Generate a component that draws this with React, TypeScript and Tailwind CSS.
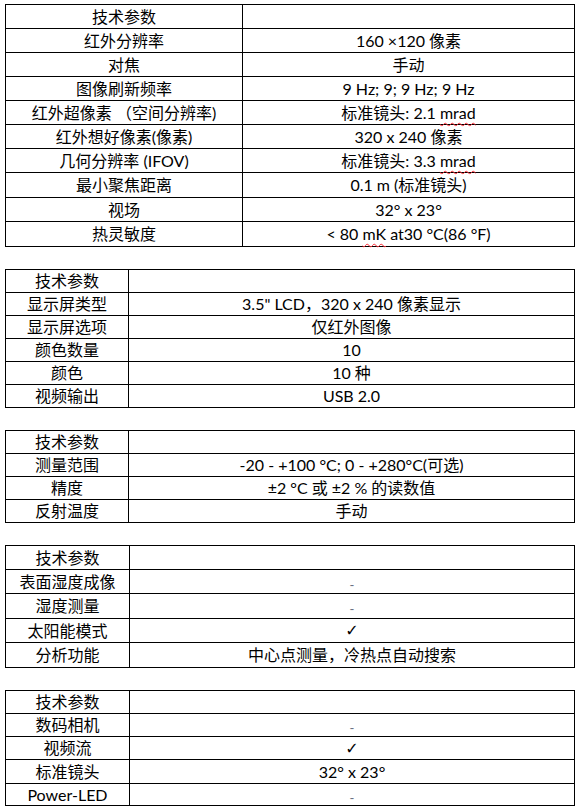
import React from "react";

type Cell = React.ReactNode;
type Row = { label: Cell; value: Cell; h: string };

const Squiggle = ({ children }: { children: React.ReactNode }) => (
  <span className="underline decoration-wavy decoration-red-500 decoration-1 underline-offset-[3px]">{children}</span>
);

const T1: Row[] = [
  { label: "技术参数", value: "", h: "h-[24px]" },
  { label: "红外分辨率", value: "160 ×120 像素", h: "h-[24px]" },
  { label: "对焦", value: "手动", h: "h-[24px]" },
  { label: "图像刷新频率", value: "9 Hz; 9; 9 Hz; 9 Hz", h: "h-[24px]" },
  {
    label: "红外超像素 （空间分辨率)",
    value: (
      <>
        标准镜头: 2.1 <Squiggle>mrad</Squiggle>
      </>
    ),
    h: "h-[24px]",
  },
  { label: "红外想好像素(像素)", value: "320 x 240 像素", h: "h-[24px]" },
  {
    label: "几何分辨率 (IFOV)",
    value: (
      <>
        标准镜头: 3.3 <Squiggle>mrad</Squiggle>
      </>
    ),
    h: "h-[24px]",
  },
  { label: "最小聚焦距离", value: "0.1 m (标准镜头)", h: "h-[25px]" },
  { label: "视场", value: "32° x 23°", h: "h-[24px]" },
  {
    label: "热灵敏度",
    value: (
      <>
        &lt; 80 <Squiggle>mK</Squiggle> at30 °C(86 °F)
      </>
    ),
    h: "h-[25px]",
  },
];

const T2: Row[] = [
  { label: "技术参数", value: "", h: "h-[23px]" },
  { label: "显示屏类型", value: "3.5\" LCD，320 x 240 像素显示", h: "h-[23px]" },
  { label: "显示屏选项", value: "仅红外图像", h: "h-[23px]" },
  { label: "颜色数量", value: "10", h: "h-[23px]" },
  { label: "颜色", value: "10 种", h: "h-[23px]" },
  { label: "视频输出", value: "USB 2.0", h: "h-[23px]" },
];

const T3: Row[] = [
  { label: "技术参数", value: "", h: "h-[23px]" },
  { label: "测量范围", value: "-20 - +100 °C; 0 - +280°C(可选)", h: "h-[23px]" },
  { label: "精度", value: "±2 °C 或 ±2 % 的读数值", h: "h-[23px]" },
  { label: "反射温度", value: "手动", h: "h-[23px]" },
];

const Check = () => <span className="font-['DejaVu_Sans'] text-[16px] font-bold">✓</span>;
const Dash = () => <span className="text-gray-500 text-[13px] relative top-[2px]">-</span>;

const T4: Row[] = [
  { label: "技术参数", value: "", h: "h-[24px]" },
  { label: "表面湿度成像", value: <Dash />, h: "h-[24px]" },
  { label: "湿度测量", value: <Dash />, h: "h-[25px]" },
  { label: "太阳能模式", value: <Check />, h: "h-[24px]" },
  { label: "分析功能", value: "中心点测量，冷热点自动搜索", h: "h-[25px]" },
];

const T5: Row[] = [
  { label: "技术参数", value: "", h: "h-[23px]" },
  { label: "数码相机", value: <Dash />, h: "h-[23px]" },
  { label: "视频流", value: <Check />, h: "h-[23px]" },
  { label: "标准镜头", value: "32° x 23°", h: "h-[24px]" },
  { label: "Power-LED", value: <Dash />, h: "h-[22px]" },
];

function SpecTable({ rows, leftW }: { rows: Row[]; leftW: string }) {
  return (
    <table className="border-collapse w-[570px] table-fixed">
      <colgroup>
        <col className={leftW} />
        <col />
      </colgroup>
      <tbody>
        {rows.map((r, i) => (
          <tr key={i} className={r.h}>
            <td className="border border-black text-center p-0 leading-none whitespace-nowrap">{r.label}</td>
            <td className="border border-black text-center p-0 leading-none whitespace-nowrap">{r.value}</td>
          </tr>
        ))}
      </tbody>
    </table>
  );
}

export default function App() {
  return (
    <div className="w-[581px] h-[812px] bg-white text-black text-[16px] font-['Lato','Noto_Sans_CJK_SC',sans-serif] pt-[4px] pl-[5px] flex flex-col gap-[22px]">
      <SpecTable rows={T1} leftW="w-[237px]" />
      <SpecTable rows={T2} leftW="w-[123px]" />
      <SpecTable rows={T3} leftW="w-[123px]" />
      <SpecTable rows={T4} leftW="w-[124px]" />
      <SpecTable rows={T5} leftW="w-[124px]" />
    </div>
  );
}
